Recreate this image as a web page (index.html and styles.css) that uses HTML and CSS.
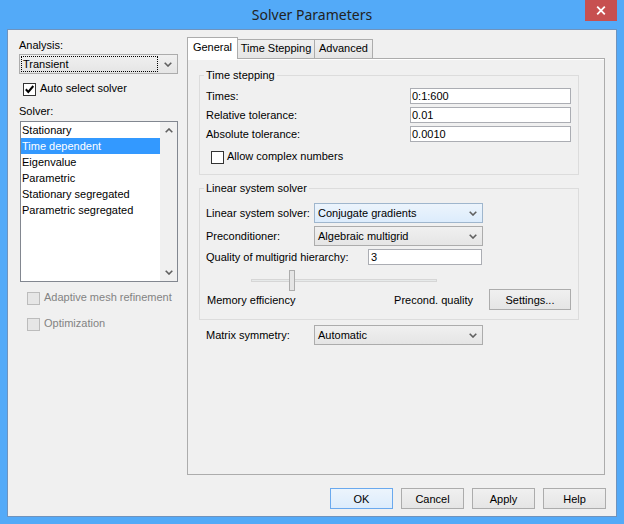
FILE: index.html
```html
<!DOCTYPE html>
<html>
<head>
<meta charset="utf-8">
<title>Solver Parameters</title>
<link rel="stylesheet" href="styles.css">
</head>
<body>
<div class="window">
  <div class="titlebar">
    <div></div>
    <div class="title">Solver Parameters</div>
    <div class="close"><svg width="10" height="9" viewBox="0 0 10 9"><path d="M1.2 0.7 L8.8 8.3 M8.8 0.7 L1.2 8.3" stroke="#fff" stroke-width="1.8" fill="none"/></svg></div>
  </div>
  <div class="client">
    <div class="main">
      <div class="left">
        <div class="lbl">Analysis:</div>
        <div class="combo combo-analysis">
          <div class="focus">Transient</div>
          <svg class="arrow" width="8" height="5" viewBox="0 0 8 5"><path d="M0.7 0.7 L4 4 L7.3 0.7" stroke="#606060" stroke-width="1.6" fill="none"/></svg>
        </div>
        <div class="check-row auto">
          <span class="box"><svg width="11" height="11" viewBox="0 0 11 11"><path d="M1.8 5.3 L4.3 8 L9.3 2" stroke="#000" stroke-width="2" fill="none"/></svg></span>
          <span class="ctext">Auto select solver</span>
        </div>
        <div class="lbl solver-lbl">Solver:</div>
        <div class="list">
          <div class="items">
            <div class="item">Stationary</div>
            <div class="item sel">Time dependent</div>
            <div class="item">Eigenvalue</div>
            <div class="item">Parametric</div>
            <div class="item">Stationary segregated</div>
            <div class="item">Parametric segregated</div>
          </div>
          <div class="scroll">
            <div class="sbtn"><svg width="8" height="5" viewBox="0 0 8 5"><path d="M0.7 4.3 L4 1 L7.3 4.3" stroke="#606060" stroke-width="1.6" fill="none"/></svg></div>
            <div class="sbtn"><svg width="8" height="5" viewBox="0 0 8 5"><path d="M0.7 0.7 L4 4 L7.3 0.7" stroke="#606060" stroke-width="1.6" fill="none"/></svg></div>
          </div>
        </div>
        <div class="check-row disabled adaptive">
          <span class="box"></span>
          <span class="ctext">Adaptive mesh refinement</span>
        </div>
        <div class="check-row disabled optim">
          <span class="box"></span>
          <span class="ctext">Optimization</span>
        </div>
      </div>

      <div class="tabctl">
        <div class="tabstrip">
          <div class="tab selected t1">General</div>
          <div class="tab t2">Time Stepping</div>
          <div class="tab t3">Advanced</div>
        </div>
        <div class="panel">
          <fieldset class="group g1">
            <legend>Time stepping</legend>
            <div class="fields">
              <span>Times:</span><div class="input">0:1:600</div>
              <span>Relative tolerance:</span><div class="input">0.01</div>
              <span>Absolute tolerance:</span><div class="input">0.0010</div>
            </div>
            <div class="check-row complex">
              <span class="box"></span>
              <span class="ctext">Allow complex numbers</span>
            </div>
          </fieldset>

          <fieldset class="group g2">
            <legend>Linear system solver</legend>
            <div class="rows">
              <div class="frow">
                <span class="flbl">Linear system solver:</span>
                <div class="combo wide hot"><span>Conjugate gradients</span><svg class="arrow" width="8" height="5" viewBox="0 0 8 5"><path d="M0.7 0.7 L4 4 L7.3 0.7" stroke="#606060" stroke-width="1.6" fill="none"/></svg></div>
              </div>
              <div class="frow">
                <span class="flbl">Preconditioner:</span>
                <div class="combo wide"><span>Algebraic multigrid</span><svg class="arrow" width="8" height="5" viewBox="0 0 8 5"><path d="M0.7 0.7 L4 4 L7.3 0.7" stroke="#606060" stroke-width="1.6" fill="none"/></svg></div>
              </div>
              <div class="frow">
                <span class="flbl qlbl">Quality of multigrid hierarchy:</span>
                <div class="input qinput">3</div>
              </div>
            </div>
            <div class="slider">
              <div class="track"></div>
              <div class="thumb"></div>
            </div>
            <div class="qrow">
              <span class="mem">Memory efficiency</span>
              <span class="pq">Precond. quality</span>
              <div class="btn settings">Settings...</div>
            </div>
          </fieldset>

          <div class="frow matrix">
            <span class="flbl">Matrix symmetry:</span>
            <div class="combo wide"><span>Automatic</span><svg class="arrow" width="8" height="5" viewBox="0 0 8 5"><path d="M0.7 0.7 L4 4 L7.3 0.7" stroke="#606060" stroke-width="1.6" fill="none"/></svg></div>
          </div>
        </div>
      </div>
    </div>

    <div class="buttons">
      <div class="btn default">OK</div>
      <div class="btn">Cancel</div>
      <div class="btn">Apply</div>
      <div class="btn">Help</div>
    </div>
  </div>
</div>
</body>
</html>
```

FILE: styles.css
```css
* { box-sizing: border-box; }
html, body { margin: 0; padding: 0; }
body {
  width: 624px;
  height: 524px;
  overflow: hidden;
  background: #53aaf8;
  font: 11px "Liberation Sans", Arial, sans-serif;
  color: #000;
}
.window {
  height: 524px;
  padding: 0 7px 7px 7px;
  display: flex;
  flex-direction: column;
}
.titlebar {
  height: 29px;
  flex: none;
  display: grid;
  grid-template-columns: 1fr auto 1fr;
}
.title {
  font: 14px "Noto Sans", "Open Sans", sans-serif;
  color: #222;
  line-height: 29px;
  white-space: nowrap;
}
.close {
  justify-self: end;
  width: 32px;
  height: 21px;
  background: #c75050;
  display: flex;
  align-items: center;
  justify-content: center;
}
.client {
  flex: 1;
  border: 1px solid #6f93bd;
  background: #f0f0f0;
  display: flex;
  flex-direction: column;
}
.main {
  display: flex;
  padding: 0 11px;
}
.left {
  width: 159px;
  flex: none;
  margin-top: 8px;
}
.lbl { height: 14px; line-height: 14px; }
.solver-lbl { margin-top: 8px; }

.combo {
  height: 20px;
  border: 1px solid #acacac;
  background: linear-gradient(#f0f0f0, #e5e5e5);
  display: flex;
  align-items: center;
  white-space: nowrap;
}
.combo .arrow { margin-left: auto; margin-right: 5px; flex: none; }
.combo-analysis { margin-top: 2px; padding: 1px; }
.combo-analysis .arrow { margin-right: 4px; }
.focus {
  width: 137px;
  height: 16px;
  border: 1px dotted #000;
  line-height: 14px;
  padding-left: 1px;
}
.combo.wide { width: 169px; padding-left: 3px; }
.combo.hot {
  border-color: #9fb6cd;
  background: linear-gradient(#ecf4fc, #dcecfc);
}

.check-row {
  display: flex;
  align-items: center;
  gap: 4px;
  height: 13px;
  white-space: nowrap;
}
.ctext { line-height: 13px; padding-bottom: 2px; }
.box {
  width: 13px;
  height: 13px;
  flex: none;
  border: 1px solid #333;
  background: #fff;
  display: flex;
  align-items: center;
  justify-content: center;
}
.auto { margin-top: 9px; padding-left: 4px; }
.disabled { color: #838383; }
.disabled .box { border-color: #bcbcbc; background: #e6e6e6; }
.adaptive { margin-top: 10px; padding-left: 8px; }
.optim { margin-top: 13px; padding-left: 8px; }

.list {
  margin-top: 3px;
  margin-left: 1px;
  width: 158px;
  height: 161px;
  border: 1px solid #828790;
  background: #fff;
  display: flex;
}
.items { flex: 1; }
.item {
  height: 16px;
  line-height: 16px;
  padding-left: 1px;
  white-space: nowrap;
}
.item.sel { background: #3399ff; color: #fff; }
.scroll {
  width: 17px;
  flex: none;
  background: #f0f0f0;
  display: flex;
  flex-direction: column;
  justify-content: space-between;
}
.sbtn {
  height: 17px;
  display: flex;
  align-items: center;
  justify-content: center;
}

.tabctl {
  width: 418px;
  flex: none;
  margin-left: 9px;
  margin-top: 7px;
}
.tabstrip {
  height: 21px;
  display: flex;
  align-items: flex-end;
}
.tab {
  height: 19px;
  line-height: 17px;
  border: 1px solid #acacac;
  border-bottom: none;
  background: linear-gradient(#f0f0f0, #e5e5e5);
  text-align: center;
  margin-left: -1px;
  white-space: nowrap;
}
.tab.selected {
  height: 22px;
  line-height: 19px;
  background: #fff;
  margin-left: 0;
  margin-bottom: -1px;
  position: relative;
  z-index: 1;
}
.t1 { width: 51px; }
.t2 { width: 78px; }
.t3 { width: 59px; }
.panel {
  height: 417px;
  border: 1px solid #acacac;
  background: #f0f0f0;
  box-shadow: inset 0 1px 0 #fff;
  padding: 9px 0 0 11px;
}

fieldset.group {
  margin: 0;
  width: 380px;
  min-width: 0;
  border: 1px solid #dcdcdc;
}
fieldset.group legend {
  padding: 0 2px;
  margin-left: -2px;
  line-height: 14px;
}
fieldset.g1 { padding: 6px 7px 10px 6px; }
fieldset.g2 { margin-top: 6px; padding: 8px 7px 9px 6px; }

.fields {
  display: grid;
  grid-template-columns: 1fr 161px;
  row-gap: 3px;
  align-items: center;
}
.fields span { line-height: 16px; white-space: nowrap; }
.input {
  height: 16px;
  border: 1px solid #abadb3;
  background: #fff;
  line-height: 14px;
  padding-left: 1px;
}
.complex { margin-top: 9px; padding-left: 5px; gap: 3px; }

.rows { display: flex; flex-direction: column; gap: 3px; }
.frow { display: flex; align-items: center; }
.flbl { width: 108px; flex: none; white-space: nowrap; }
.qlbl { width: 162px; }
.qinput { width: 114px; padding-left: 2px; }

.slider {
  position: relative;
  height: 19px;
  width: 186px;
  margin-top: 5px;
  margin-left: 45px;
}
.track {
  position: relative;
  top: 9px;
  height: 3px;
  border: 1px solid #d6d6d6;
  background: #e7eaea;
}
.thumb {
  position: absolute;
  left: 38px;
  top: 0;
  width: 6px;
  height: 21px;
  border: 1px solid #acacac;
  background: #e5e5e5;
}
.qrow {
  display: flex;
  align-items: center;
  height: 21px;
  white-space: nowrap;
}
.mem { margin-left: 1px; }
.pq { margin-left: auto; margin-right: 16px; }

.matrix { margin-top: 5px; margin-left: 7px; }

.btn {
  width: 63px;
  height: 21px;
  flex: none;
  border: 1px solid #acacac;
  background: linear-gradient(#f0f0f0, #e5e5e5);
  display: flex;
  align-items: center;
  justify-content: center;
  white-space: nowrap;
}
.btn.settings { width: 82px; }
.btn.default {
  border-color: #6aa9ee;
  background: linear-gradient(#ecf4fc, #dcecfc);
}
.buttons {
  display: flex;
  justify-content: flex-end;
  gap: 8px;
  margin-top: 13px;
  padding-right: 10px;
}
```
